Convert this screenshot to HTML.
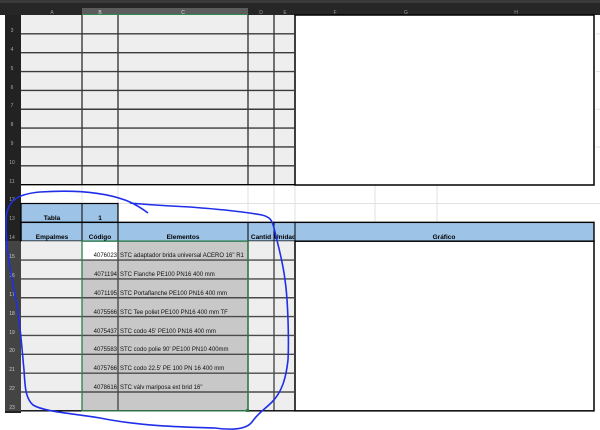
<!DOCTYPE html>
<html><head><meta charset="utf-8"><style>
html,body{margin:0;padding:0;background:#fff;width:600px;height:430px;overflow:hidden}
svg{display:block}
text{font-family:"Liberation Sans",sans-serif}
</style></head><body>
<svg width="600" height="430" viewBox="0 0 600 430" xmlns="http://www.w3.org/2000/svg">
<rect width="600" height="430" fill="#fff"/>
<g stroke="#e2e2e2" stroke-width="1">
<line x1="596" y1="33.85" x2="600" y2="33.85"/><line x1="596" y1="71.55" x2="600" y2="71.55"/><line x1="596" y1="109.25" x2="600" y2="109.25"/><line x1="596" y1="146.95" x2="600" y2="146.95"/>
<line x1="21" y1="203.5" x2="600" y2="203.5"/>
<line x1="248" y1="185" x2="248" y2="222"/><line x1="274" y1="185" x2="274" y2="222"/><line x1="295" y1="185" x2="295" y2="222"/><line x1="375" y1="185" x2="375" y2="222"/><line x1="437" y1="185" x2="437" y2="222"/>
<line x1="118" y1="185" x2="118" y2="203"/><line x1="82" y1="185" x2="82" y2="203"/>
</g>
<rect x="0" y="0" width="600" height="15" fill="#262626"/>
<rect x="0" y="0" width="600" height="3" fill="#3a3a3a"/>
<rect x="82" y="8" width="166" height="7" fill="#5c5c5c"/>
<rect x="82" y="14" width="166" height="1" fill="#2f8a4f"/>
<g fill="#9a9a9a" font-size="5" text-anchor="middle">
<text x="52" y="14">A</text><text x="100" y="14" fill="#ddd">B</text><text x="183" y="14" fill="#ddd">C</text><text x="261" y="14">D</text><text x="285" y="14">E</text><text x="335" y="14">F</text><text x="406" y="14">G</text><text x="516" y="14">H</text>
</g>
<rect x="5" y="15" width="16" height="398" fill="#222"/>
<rect x="5" y="241" width="16" height="170" fill="#444"/>
<g fill="#aaa" font-size="5" text-anchor="middle">
<text x="12" y="32">3</text><text x="12" y="51">4</text><text x="12" y="70">5</text><text x="12" y="89">6</text><text x="12" y="107">7</text><text x="12" y="126">8</text><text x="12" y="145">9</text><text x="12" y="164">10</text><text x="12" y="183">11</text><text x="12" y="201">12</text><text x="12" y="220">13</text><text x="12" y="239">14</text>
<g fill="#ccc"><text x="12" y="258">15</text><text x="12" y="277">16</text><text x="12" y="296">17</text><text x="12" y="315">18</text><text x="12" y="334">19</text><text x="12" y="352">20</text><text x="12" y="371">21</text><text x="12" y="390">22</text><text x="12" y="409">23</text></g>
</g>
<rect x="21" y="15" width="274" height="170" fill="#eeeeee"/>
<rect x="295" y="15" width="299" height="170" fill="#fff" stroke="#000" stroke-width="1.5"/>
<g stroke="#3a3a3a" stroke-width="1.4">
<line x1="21" y1="33.85" x2="295" y2="33.85"/><line x1="21" y1="52.7" x2="295" y2="52.7"/><line x1="21" y1="71.55" x2="295" y2="71.55"/><line x1="21" y1="90.4" x2="295" y2="90.4"/><line x1="21" y1="109.25" x2="295" y2="109.25"/><line x1="21" y1="128.1" x2="295" y2="128.1"/><line x1="21" y1="146.95" x2="295" y2="146.95"/><line x1="21" y1="165.8" x2="295" y2="165.8"/>
<line x1="82" y1="15" x2="82" y2="185"/><line x1="118" y1="15" x2="118" y2="185"/><line x1="248" y1="15" x2="248" y2="185"/><line x1="274" y1="15" x2="274" y2="185"/>
</g>
<line x1="21" y1="184.65" x2="295" y2="184.65" stroke="#000" stroke-width="1.4"/>
<rect x="21" y="203.5" width="97" height="18.85" fill="#9dc3e6" stroke="#000" stroke-width="1.2"/>
<line x1="82" y1="203.5" x2="82" y2="222.35" stroke="#000"/>
<g font-size="6.5" font-weight="bold" text-anchor="middle" fill="#000">
<text x="52" y="220">Tabla</text><text x="100" y="220">1</text>
</g>
<rect x="21" y="222.35" width="573" height="18.85" fill="#9dc3e6" stroke="#000" stroke-width="1.4"/>
<g stroke="#000" stroke-width="1"><line x1="82" y1="222" x2="82" y2="241"/><line x1="118" y1="222" x2="118" y2="241"/><line x1="248" y1="222" x2="248" y2="241"/><line x1="274" y1="222" x2="274" y2="241"/><line x1="295" y1="222" x2="295" y2="241"/></g>
<g font-size="6.5" font-weight="bold" text-anchor="middle" fill="#000">
<text x="52" y="239">Empalmes</text><text x="100" y="239">Código</text><text x="183" y="239">Elementos</text><text x="261" y="239">Cantid</text><text x="285" y="239">Unidad</text><text x="444" y="239">Gráfico</text>
</g>
<rect x="21" y="241.2" width="61" height="169.65" fill="#eeeeee"/>
<rect x="248" y="241.2" width="47" height="169.65" fill="#eeeeee"/>
<rect x="82" y="241.2" width="166" height="169.65" fill="#c8c8c8"/>
<rect x="82" y="241.2" width="36" height="18.85" fill="#fff"/>
<rect x="295" y="241.2" width="299" height="169.65" fill="#fff" stroke="#000" stroke-width="1.5"/>
<g stroke="#4a4a4a" stroke-width="1.4">
<line x1="21" y1="260.05" x2="295" y2="260.05"/><line x1="21" y1="278.9" x2="295" y2="278.9"/><line x1="21" y1="297.75" x2="295" y2="297.75"/><line x1="21" y1="316.6" x2="295" y2="316.6"/><line x1="21" y1="335.45" x2="295" y2="335.45"/><line x1="21" y1="354.3" x2="295" y2="354.3"/><line x1="21" y1="373.15" x2="295" y2="373.15"/><line x1="21" y1="392" x2="295" y2="392"/>
<line x1="118" y1="241" x2="118" y2="411"/><line x1="274" y1="241" x2="274" y2="411"/><line x1="248" y1="241" x2="248" y2="411"/>
</g>
<line x1="21" y1="410.85" x2="295" y2="410.85" stroke="#000" stroke-width="1.4"/>
<rect x="82" y="241.2" width="166" height="169.65" fill="none" stroke="#2f7d4a" stroke-width="1.3"/>
<rect x="246" y="409" width="3" height="3" fill="#2f7d4a"/>
<g font-size="6" fill="#111">
<g text-anchor="end">
<text x="117" y="257">4076023</text><text x="117" y="276">4071194</text><text x="117" y="295">4071195</text><text x="117" y="314">4075566</text><text x="117" y="333">4075437</text><text x="117" y="351">4075583</text><text x="117" y="370">4075766</text><text x="117" y="389">4078616</text>
</g>
<text x="120" y="257">STC adaptador brida universal ACERO 16" R1</text>
<text x="120" y="276">STC Flanche PE100 PN16 400 mm</text>
<text x="120" y="295">STC Portaflanche PE100 PN16 400 mm</text>
<text x="120" y="314">STC Tee poliet PE100 PN16 400 mm TF</text>
<text x="120" y="333">STC codo 45' PE100 PN16 400 mm</text>
<text x="120" y="351">STC codo polie 90' PE100 PN10 400mm</text>
<text x="120" y="370">STC codo 22.5' PE 100 PN 16 400 mm</text>
<text x="120" y="389">STC válv mariposa ext brid 16"</text>
</g>
<path d="M7,212 C10,200 18,194 40,192 C70,190 100,191 125,200 C133,203 140,207 148,213 M130,203 C150,205 170,206 190,207 C215,209 240,211 262,215 C270,217 272,220 274,228 C278,245 283,262 285,280 C288,300 289,340 288,360 C286,378 282,392 272,402 C264,410 258,413 252,422 C246,430 230,430 215,428 C180,427 140,426 100,418 C70,413 45,412 33,405 C25,398 25,385 24,370 C22,350 20,320 16,300 C12,280 7,255 6,230 C6,220 6,214 7,212" fill="none" stroke="#1f2ee8" stroke-width="1.6"/>
</svg>
</body></html>
